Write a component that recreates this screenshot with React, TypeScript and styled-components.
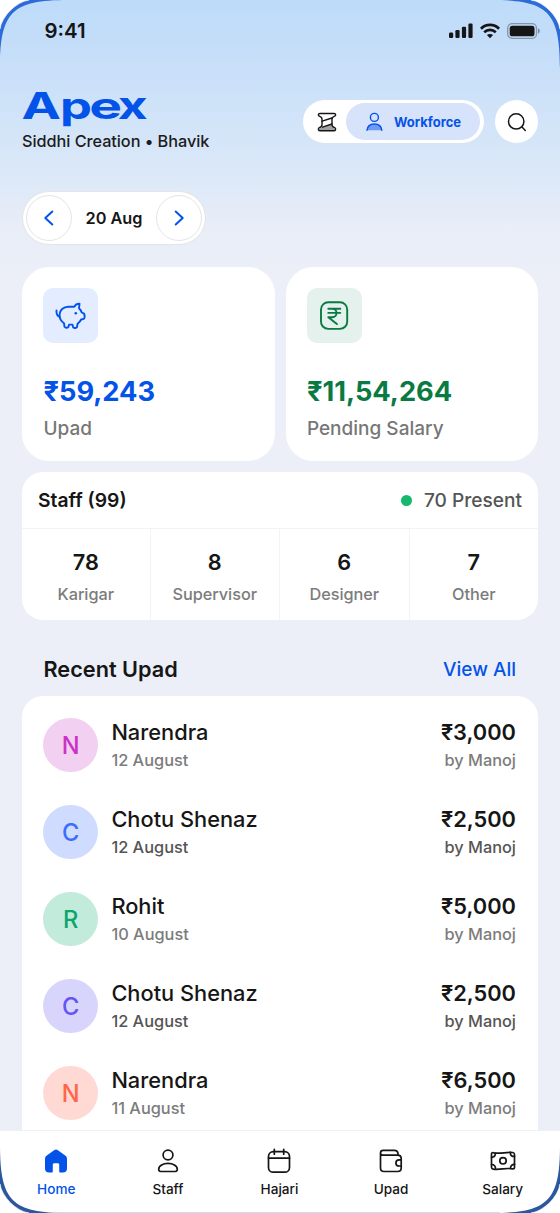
import React from "react";
import styled, { createGlobalStyle } from "styled-components";

const Global = createGlobalStyle`
  *, *::before, *::after { box-sizing: border-box; }
  html, body { margin: 0; padding: 0; background: #fff; }
  body { font-family: Inter, "Liberation Sans", sans-serif; color: #161616; -webkit-font-smoothing: antialiased; }
  button { font: inherit; color: inherit; border: 0; background: none; padding: 0; margin: 0; }
  svg { display: block; flex: none; }
`;

const BLUE = "#0353e9";
const GREEN = "#0a7a43";

const Screen = styled.div`
  position: relative;
  width: 560px;
  height: 1213px;
  overflow: hidden;
  display: flex;
  flex-direction: column;
  background: linear-gradient(180deg, #bddcfa 0px, #c3ddf9 40px, #dbe8f8 172px, #e8edf7 225px, #eceff8 280px);
`;

const StatusBar = styled.div`
  height: 62px;
  padding: 0 20px 0 44.5px;
  display: flex;
  align-items: center;
  justify-content: space-between;
  flex: none;
`;
const Clock = styled.div`
  font-size: 20.4px;
  font-weight: 600;
  line-height: 24px;
`;
const StatusIcons = styled.div`
  display: flex;
  align-items: center;
  gap: 7px;
`;

const Header = styled.header`
  display: flex;
  justify-content: space-between;
  padding: 28px 22px 0;
  height: 129px;
  flex: none;
`;
const Brand = styled.div`
  display: flex;
  flex-direction: column;
`;
const Subtitle = styled.div`
  margin-top: 1px;
  font-size: 16.3px;
  line-height: 20px;
  font-weight: 500;
  letter-spacing: -0.05px;
  color: #1c1c1c;
  white-space: nowrap;
`;
const Actions = styled.div`
  display: flex;
  gap: 11px;
  padding-top: 10px;
  height: 53px;
`;
const Switcher = styled.div`
  width: 181px;
  height: 43px;
  border-radius: 22px;
  background: #fff;
  display: flex;
  align-items: center;
  justify-content: space-between;
  padding: 0 4px 0 12px;
`;
const ActivePill = styled.button`
  width: 134px;
  height: 37px;
  border-radius: 19px;
  background: #d7e2fb;
  color: ${BLUE};
  display: flex;
  align-items: center;
  padding-left: 16px;
  gap: 8px;
  font-size: 13px;
  font-weight: 700;
`;
const RoundButton = styled.button`
  width: 43px;
  height: 43px;
  border-radius: 50%;
  background: #fff;
  display: grid;
  place-items: center;
`;

const Content = styled.main`
  flex: 1;
  min-height: 0;
  overflow: hidden;
  padding: 0 22px;
  display: flex;
  flex-direction: column;
`;
const DatePicker = styled.div`
  width: 184px;
  height: 54px;
  border-radius: 27px;
  border: 1.4px solid #e4e4e6;
  background: #fff;
  display: flex;
  align-items: center;
  justify-content: space-between;
  padding: 0 2.6px;
  flex: none;
  font-size: 16.3px;
  font-weight: 600;
`;
const StepButton = styled.button`
  width: 46px;
  height: 46px;
  border-radius: 50%;
  border: 1.4px solid #e4e4e6;
  display: grid;
  place-items: center;
`;

const Cards = styled.div`
  display: grid;
  grid-template-columns: 1fr 1fr;
  gap: 11px;
  margin-top: 22px;
  flex: none;
`;
const SummaryCard = styled.section`
  height: 194px;
  border-radius: 27px;
  background: #fff;
  padding: 21.4px;
`;
const IconTile = styled.div<{ $bg: string }>`
  width: 55px;
  height: 55px;
  border-radius: 10px;
  background: ${(p) => p.$bg};
  display: grid;
  place-items: center;
`;
const Total = styled.div<{ $color: string }>`
  margin-top: 32px;
  font-size: 27.25px;
  line-height: 34px;
  font-weight: 700;
  color: ${(p) => p.$color};
`;
const TotalLabel = styled.div`
  margin-top: 7px;
  font-size: 19px;
  line-height: 26px;
  font-weight: 500;
  color: #777;
`;

const StaffCard = styled.section`
  margin-top: 11px;
  height: 148px;
  border-radius: 21px;
  background: #fff;
  flex: none;
  overflow: hidden;
`;
const StaffHead = styled.div`
  height: 57px;
  padding: 0 16px;
  display: flex;
  align-items: center;
  justify-content: space-between;
  border-bottom: 1.4px solid #f3f3f3;
  font-size: 19.3px;
  font-weight: 600;
`;
const Present = styled.div`
  display: flex;
  align-items: center;
  gap: 12px;
  font-size: 19.1px;
  font-weight: 500;
  color: #555;
  &::before {
    content: "";
    width: 11px;
    height: 11px;
    border-radius: 50%;
    background: #15b86c;
  }
`;
const StaffGrid = styled.div`
  display: grid;
  grid-template-columns: 128.5px 129.5px 129.5px 1fr;
  height: 91px;
`;
const StaffCell = styled.div`
  text-align: center;
  padding-top: 19px;
  border-right: 1.4px solid #f3f3f3;
  &:last-child { border-right: 0; }
`;
const Count = styled.div`
  font-size: 21.7px;
  line-height: 28px;
  font-weight: 600;
`;
const Role = styled.div`
  margin-top: 8px;
  font-size: 16.3px;
  line-height: 20px;
  font-weight: 500;
  letter-spacing: -0.05px;
  color: #7c7c7c;
`;

const SectionHead = styled.div`
  height: 76px;
  padding: 22px 22px 0 21.5px;
  display: flex;
  justify-content: space-between;
  line-height: 54px;
  flex: none;
`;
const SectionTitle = styled.h2`
  margin: 0;
  font-size: 21.7px;
  font-weight: 600;
`;
const ViewAll = styled.a`
  font-size: 19px;
  line-height: 56px;
  font-weight: 500;
  color: ${BLUE};
`;
const List = styled.ul`
  margin: 0;
  padding: 22px 22px 0 21.4px;
  list-style: none;
  background: #fff;
  border-radius: 21px 21px 0 0;
  flex: 1;
  display: flex;
  flex-direction: column;
  gap: 33px;
`;
const Row = styled.li`
  display: flex;
  align-items: center;
  height: 54px;
  flex: none;
`;
const Avatar = styled.div<{ $bg: string; $fg: string }>`
  width: 54.6px;
  height: 54.6px;
  border-radius: 50%;
  background: ${(p) => p.$bg};
  color: ${(p) => p.$fg};
  display: grid;
  place-items: center;
  font-size: 23.6px;
  font-weight: 500;
`;
const Side = styled.div<{ $end?: boolean }>`
  margin-left: ${(p) => (p.$end ? "auto" : "13.4px")};
  padding-bottom: 2px;
  text-align: ${(p) => (p.$end ? "right" : "left")};
`;
const Primary = styled.div<{ $bold?: boolean }>`
  font-size: 21.8px;
  line-height: 28px;
  font-weight: ${(p) => (p.$bold ? 600 : 500)};
`;
const Secondary = styled.div<{ $dark?: boolean }>`
  margin-top: 4px;
  font-size: 16.35px;
  line-height: 20px;
  font-weight: 500;
  color: ${(p) => (p.$dark ? "#555" : "#7c7c7c")};
`;

const TabBar = styled.nav`
  height: 83px;
  flex: none;
  background: #fff;
  border-top: 1.4px solid #f0f0f2;
  display: grid;
  grid-template-columns: repeat(5, 1fr);
  padding: 0 1.5px 0 0.5px;
`;
const Tab = styled.button<{ $active?: boolean }>`
  display: flex;
  flex-direction: column;
  align-items: center;
  padding-top: 16px;
  gap: 5px;
  font-size: 13.6px;
  line-height: 18px;
  font-weight: 500;
  color: ${(p) => (p.$active ? BLUE : "#161616")};
`;

const Frame = styled.svg`
  position: absolute;
  inset: 0;
  pointer-events: none;
`;

const line = { fill: "none", stroke: "currentColor", strokeLinecap: "round" as const, strokeLinejoin: "round" as const };

const letters = [
  { ch: "A", x: -0.5, size: 36.5, width: 39.5 },
  { ch: "p", x: 38, size: 37, width: 32 },
  { ch: "e", x: 67.2, size: 37, width: 32.8 },
  { ch: "x", x: 95.8, size: 37.5, width: 30 },
];
const Logo = () => (
  <svg width="130" height="40" viewBox="0 0 130 40" fill={BLUE} fontFamily="Inter, sans-serif" fontWeight="700" overflow="visible">
    {letters.map((l) => (
      <text key={l.ch} x={l.x} y="29.4" fontSize={l.size} textLength={l.width} lengthAdjust="spacingAndGlyphs">
        {l.ch}
      </text>
    ))}
  </svg>
);

const Signal = () => (
  <svg width="24" height="16" viewBox="0 0 24 16" fill="#161616">
    <rect x="0" y="9.5" width="4.2" height="5.5" rx="1.2" />
    <rect x="6.4" y="7" width="4.2" height="8" rx="1.2" />
    <rect x="12.9" y="3.8" width="4.2" height="11.2" rx="1.2" />
    <rect x="19.4" y="0.5" width="4.2" height="14.5" rx="1.2" />
  </svg>
);
const Wifi = () => (
  <svg width="20" height="16" viewBox="0 0 20 16" fill="none" stroke="#161616" strokeWidth="2.7">
    <path d="M0.9 5.7C6 .7 14 .7 19.1 5.7" />
    <path d="M4.2 9.2c3.3-3.1 8.3-3.1 11.6 0" />
    <path d="M10 15.2 6.9 12.1c1.8-1.6 4.4-1.6 6.2 0Z" fill="#161616" stroke="none" />
  </svg>
);
const Battery = () => (
  <svg width="33" height="16" viewBox="0 0 33 16">
    <rect x=".7" y=".7" width="28.8" height="14.6" rx="4.4" fill="none" stroke="#161616" strokeOpacity=".35" strokeWidth="1.3" />
    <rect x="2.7" y="2.7" width="24.8" height="10.6" rx="2.6" fill="#161616" />
    <path d="M31 5.3c1.2.5 1.8 1.5 1.8 2.7s-.6 2.2-1.8 2.7z" fill="#161616" fillOpacity=".4" />
  </svg>
);
const Spool = () => (
  <svg width="24" height="24" viewBox="0 0 24 24" {...line} strokeWidth="1.4">
    <path d="M6.500 17.200 16.800 14.600l.6 2.200 2.600 2-.6 2H4.200l-.5-2z" fill="#161616" fillOpacity=".4" stroke="none" />
    <path d="M4.800 3.500H19.200c1.700 0 1.900 2.200.5 2.700-2 .7-2.700 1.500-2.700 3V14.800c0 1.500.7 2.200 2.700 2.900 1.400.5 1.200 3.100-.5 3.100H4.800c-1.700 0-1.900-2.600-.5-3.100 2-.7 2.700-1.400 2.700-2.900V9.200c0-1.500-.7-2.300-2.700-3-1.400-.5-1.200-2.700.5-2.700Z" />
    <path d="m7.200 11.200 9.700-3.200M7.500 17.100l9.400-3.100" />
  </svg>
);
const UserFilled = () => (
  <svg width="24" height="24" viewBox="0 0 24 24" {...line} strokeWidth="1.4">
    <circle cx="12.400" cy="7.400" r="4" />
    <path d="M5 20.300c.4-3.900 3.200-6.300 7.400-6.300s7 2.400 7.400 6.300Z" fill="currentColor" fillOpacity=".5" stroke="none" />
    <path d="M5 20.300c.4-3.900 3.200-6.300 7.400-6.300s7 2.400 7.400 6.300" />
  </svg>
);
const Search = () => (
  <svg width="24" height="24" viewBox="0 0 24 24" {...line} strokeWidth="1.5">
    <circle cx="11.200" cy="11.400" r="7.700" />
    <path d="m17 17 3.300 3.400" />
  </svg>
);
const Chevron = ({ right }: { right?: boolean }) => (
  <svg width="24" height="24" viewBox="0 0 24 24" {...line} stroke={BLUE} strokeWidth="2">
    <path d={right ? "m8.700 5.500 7 6.500-7 6.500" : "m15.300 5.500-7 6.500 7 6.500"} />
  </svg>
);
const Piggy = () => (
  <svg width="32" height="32" viewBox="0 0 32 32" {...line} stroke={BLUE} strokeWidth="1.900">
    <path d="M19.300 6.700c1-1.800 2.800-3 5.200-2.900L24 8.200c1.300 1.100 2.100 2.500 2.700 4.300l2.400 1.100c.8 2.200.6 4.200-.3 5.300l-2.600.6c-.9 1.800-2.300 3.200-3.600 4.300l-.7 3.500c-1.300 1.100-2.900.9-3.800-.2l-.7-2.500h-3.300l-.7 2.500c-1.300 1-3 .9-3.900-.3L9 23.200c-2.600-1.800-4.500-4.800-4.500-8.200 0-4.900 4-8.300 8.900-8.300Z" />
    <path d="M4.600 16.600C2.700 16.300 1.600 14.600 1.500 12v-1.500" />
    <circle cx="20.800" cy="13.200" r="1.300" fill={BLUE} stroke="none" />
  </svg>
);
const RupeeBox = () => (
  <svg width="32" height="32" viewBox="0 0 32 32" {...line} stroke={GREEN} strokeWidth="1.900">
    <rect x="3" y="2.300" width="26.200" height="26.600" rx="7.200" />
    <path d="M10.300 8.700H22.300M10.300 12.900H22.300M10.300 8.700h4c5.600 0 5.600 8.500 0 8.500h-4l8.600 6.900" />
  </svg>
);
const HomeIcon = () => (
  <svg width="28" height="28" viewBox="0 0 28 28" fill={BLUE}>
    <path d="M12.100 3.200 4.800 8.500C3.500 9.500 3 10.600 3 12.200v9.300C3 24 4.500 25.500 7 25.500h2.700c.8 0 1.100-.4 1.100-1.100v-6.700c0-1 .5-1.500 1.500-1.500h3.400c1 0 1.500.5 1.500 1.500v6.700c0 .7.3 1.100 1.100 1.100H21c2.500 0 4-1.500 4-4v-9.300c0-1.600-.5-2.700-1.800-3.700l-7.300-5.300c-1.300-.9-2.500-.9-3.800 0Z" />
  </svg>
);
const StaffIcon = () => (
  <svg width="28" height="28" viewBox="0 0 28 28" {...line} strokeWidth="1.700">
    <circle cx="14" cy="8" r="4.900" />
    <path d="M14 16.400c4.700 0 9.300 2.300 9.300 5.900 0 1.300-.9 2.200-2.200 2.200H6.900c-1.300 0-2.200-.9-2.200-2.200 0-3.600 4.600-5.900 9.300-5.900Z" />
  </svg>
);
const CalendarIcon = () => (
  <svg width="28" height="28" viewBox="0 0 28 28" {...line} strokeWidth="1.700">
    <rect x="3.500" y="4.700" width="21" height="20.500" rx="4.800" />
    <path d="M3.500 11.200h21M9.300 2.300v4.900M18.700 2.300v4.900" />
  </svg>
);
const WalletIcon = () => (
  <svg width="28" height="28" viewBox="0 0 28 28" {...line} strokeWidth="1.700">
    <path d="M3.500 6v15c0 2.200 1.400 3.500 3.500 3.500h13.700c2.200 0 3.500-1.300 3.500-3.500V11.700c0-2.200-1.300-3.500-3.500-3.500H6C4.500 8.200 3.500 7.200 3.500 6c0-1.600 1-2.600 2.600-2.600h11.200c2.200 0 3.700 1.500 3.700 3.700v1.100" />
    <path d="M24.200 12.900h-2c-2 0-3.300 1.300-3.300 3s1.300 3.100 3.300 3.100h2" />
  </svg>
);
const CashIcon = () => (
  <svg width="28" height="28" viewBox="0 0 28 28" {...line} strokeWidth="1.700">
    <path d="M2.500 7c0-.9.700-1.500 1.600-1.300C11 7.500 17 4.500 23.800 5.500c1.200.2 1.700.9 1.700 1.900V20.500c0 1-.7 1.500-1.600 1.400-7-1.600-13 1.400-19.700.2-1.100-.2-1.700-.9-1.700-1.900Z" />
    <circle cx="14" cy="13.800" r="3.200" />
    <path d="M2.500 10.300c2.500 0 3.900-1.700 3.900-4M21.300 5.400c0 2.500 1.700 4.100 4.200 4.100M2.500 17.500c2.400 0 4.100 1.800 4.100 4.700M25.500 17.300c-2.300 0-3.900 1.600-4.100 4" />
  </svg>
);

const corner = "M0 0H29C16 2 2 16 0 29Z";
const rim = "M0 0H68C12 0 0 12 0 68Z";
const DeviceFrame = () => (
  <Frame width="560" height="1213" viewBox="0 0 560 1213">
    {[
      ["", "#2d6bd8"],
      ["translate(560 0) scale(-1 1)", "#2d6bd8"],
      ["translate(0 1213) scale(1 -1)", "#2a579f"],
      ["translate(560 1213) scale(-1 -1)", "#2a579f"],
    ].map(([t, c]) => (
      <g key={t} transform={t}>
        <path d={rim} fill={c} />
        <path d={corner} fill="#fff" stroke="#fff" strokeWidth=".6" />
      </g>
    ))}
    <path d="M60 1212.600H500" stroke="#b9cbea" strokeWidth=".8" />
  </Frame>
);

const staff = [["78", "Karigar"], ["8", "Supervisor"], ["6", "Designer"], ["7", "Other"]];

const upads = [
  { name: "Narendra", date: "12 August", amount: "₹3,000", bg: "#f2d0f1", fg: "#cc33c4" },
  { name: "Chotu Shenaz", date: "12 August", amount: "₹2,500", bg: "#cfdcff", fg: "#3b6eff", dark: true },
  { name: "Rohit", date: "10 August", amount: "₹5,000", bg: "#c2ebdc", fg: "#0aa66c" },
  { name: "Chotu Shenaz", date: "12 August", amount: "₹2,500", bg: "#d8d5fc", fg: "#6553f5", dark: true },
  { name: "Narendra", date: "11 August", amount: "₹6,500", bg: "#ffdad5", fg: "#ff6547" },
];

const tabs = [
  { label: "Home", icon: <HomeIcon />, active: true },
  { label: "Staff", icon: <StaffIcon /> },
  { label: "Hajari", icon: <CalendarIcon /> },
  { label: "Upad", icon: <WalletIcon /> },
  { label: "Salary", icon: <CashIcon /> },
];

export default function App() {
  return (
    <>
      <Global />
      <Screen>
        <StatusBar>
          <Clock>9:41</Clock>
          <StatusIcons>
            <Signal />
            <Wifi />
            <Battery />
          </StatusIcons>
        </StatusBar>
        <Header>
          <Brand>
            <Logo />
            <Subtitle>Siddhi Creation • Bhavik</Subtitle>
          </Brand>
          <Actions>
            <Switcher>
              <Spool />
              <ActivePill>
                <UserFilled />
                Workforce
              </ActivePill>
            </Switcher>
            <RoundButton aria-label="Search">
              <Search />
            </RoundButton>
          </Actions>
        </Header>
        <Content>
          <DatePicker>
            <StepButton aria-label="Previous day"><Chevron /></StepButton>
            20 Aug
            <StepButton aria-label="Next day"><Chevron right /></StepButton>
          </DatePicker>
          <Cards>
            <SummaryCard>
              <IconTile $bg="#e3edff"><Piggy /></IconTile>
              <Total $color={BLUE}>₹59,243</Total>
              <TotalLabel>Upad</TotalLabel>
            </SummaryCard>
            <SummaryCard>
              <IconTile $bg="#e4f1ec"><RupeeBox /></IconTile>
              <Total $color={GREEN}>₹11,54,264</Total>
              <TotalLabel>Pending Salary</TotalLabel>
            </SummaryCard>
          </Cards>
          <StaffCard>
            <StaffHead>
              <span>Staff (99)</span>
              <Present>70 Present</Present>
            </StaffHead>
            <StaffGrid>
              {staff.map(([count, role]) => (
                <StaffCell key={role}>
                  <Count>{count}</Count>
                  <Role>{role}</Role>
                </StaffCell>
              ))}
            </StaffGrid>
          </StaffCard>
          <SectionHead>
            <SectionTitle>Recent Upad</SectionTitle>
            <ViewAll>View All</ViewAll>
          </SectionHead>
          <List>
            {upads.map((u, i) => (
              <Row key={i}>
                <Avatar $bg={u.bg} $fg={u.fg}>{u.name[0]}</Avatar>
                <Side>
                  <Primary>{u.name}</Primary>
                  <Secondary $dark={u.dark}>{u.date}</Secondary>
                </Side>
                <Side $end>
                  <Primary $bold>{u.amount}</Primary>
                  <Secondary $dark={u.dark}>by Manoj</Secondary>
                </Side>
              </Row>
            ))}
          </List>
        </Content>
        <TabBar>
          {tabs.map((t) => (
            <Tab key={t.label} $active={t.active}>
              {t.icon}
              {t.label}
            </Tab>
          ))}
        </TabBar>
        <DeviceFrame />
      </Screen>
    </>
  );
}
